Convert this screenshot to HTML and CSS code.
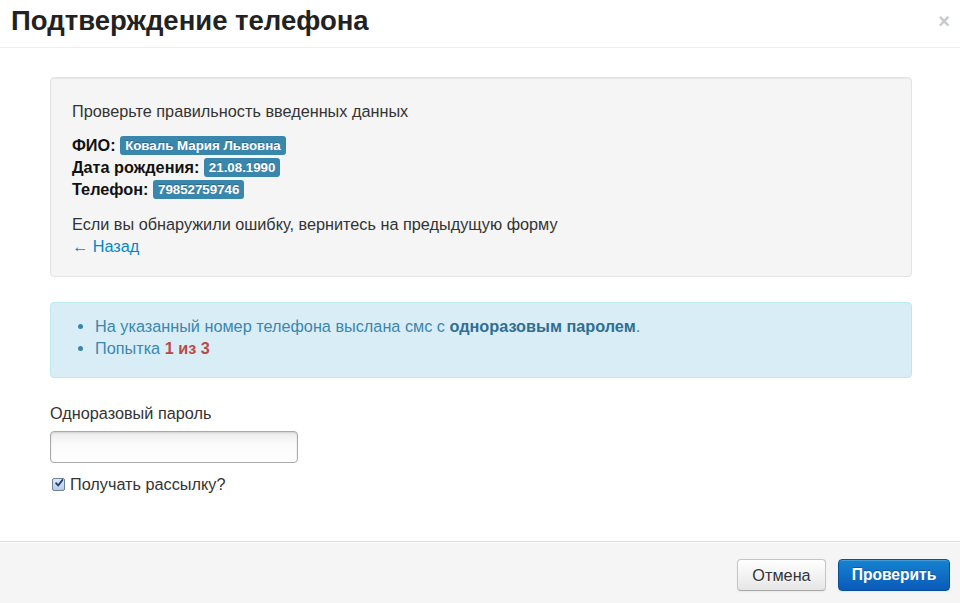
FILE: index.html
```html
<!DOCTYPE html>
<html lang="ru">
<head>
<meta charset="utf-8">
<link rel="stylesheet" href="styles.css">
</head>
<body>
<div class="modal">
  <div class="modal-header">
    <h3>Подтверждение телефона</h3>
    <span class="close">×</span>
  </div>
  <div class="modal-body">
    <div class="well">
      <p class="first">Проверьте правильность введенных данных</p>
      <div class="data">
        <div><b>ФИО:</b> <span class="label">Коваль Мария Львовна</span></div>
        <div><b>Дата рождения:</b> <span class="label">21.08.1990</span></div>
        <div><b>Телефон:</b> <span class="label">79852759746</span></div>
      </div>
      <p class="last">Если вы обнаружили ошибку, вернитесь на предыдущую форму<br><a href="#">← Назад</a></p>
    </div>
    <div class="alert">
      <ul>
        <li>На указанный номер телефона выслана смс с <b>одноразовым паролем</b>.</li>
        <li>Попытка <b class="red">1 из 3</b></li>
      </ul>
    </div>
    <label class="field-label">Одноразовый пароль</label>
    <div class="input"></div>
    <label class="check"><span class="box"><svg width="12" height="12" viewBox="0 0 12 12"><path d="M2.5 6.2 L5 9 L10 2.5" fill="none" stroke="#1d3f73" stroke-width="2.2" stroke-linecap="round" stroke-linejoin="round"/></svg></span>Получать рассылку?</label>
  </div>
  <div class="modal-footer">
    <button class="btn">Отмена</button>
    <button class="btn btn-primary">Проверить</button>
  </div>
</div>
</body>
</html>
```
FILE: styles.css
```css
* { box-sizing: border-box; }
html, body { margin: 0; padding: 0; }
body {
  width: 960px;
  height: 603px;
  overflow: hidden;
  background: #fff;
  font-family: "Liberation Sans", Arial, sans-serif;
  font-size: 16.25px;
  line-height: 22px;
  color: #333;
}
.modal {
  display: flex;
  flex-direction: column;
  height: 603px;
}
.modal-header {
  height: 48px;
  border-bottom: 1px solid #eee;
  display: flex;
  align-items: flex-start;
  justify-content: space-between;
  padding: 0 10px 0 11px;
}
.modal-header h3 {
  margin: 4px 0 0;
  font-size: 27.5px;
  line-height: 34px;
  font-weight: bold;
  color: #222;
}
.close {
  font-size: 20px;
  line-height: 20px;
  margin-top: 11px;
  color: #c8c8c8;
  font-weight: bold;
}
.modal-body {
  flex: 1;
  padding: 29px 48px 0 50px;
}
.well {
  background: #f5f5f5;
  border: 1px solid #e3e3e3;
  border-radius: 4px;
  box-shadow: inset 0 1px 1px rgba(0,0,0,0.05);
  padding: 22px 20px 16px 21px;
  height: 200px;
}
.well p { margin: 0; }
.well .first { margin-bottom: 12px; }
.data { margin-bottom: 13px; }
.data b { color: #111; }
.label {
  display: inline-block;
  background: #3a87ad;
  color: #fff;
  font-weight: bold;
  font-size: 13.3px;
  line-height: 19px;
  padding: 0 5px;
  border-radius: 3px;
  vertical-align: 1px;
  text-shadow: 0 -1px 0 rgba(0,0,0,0.25);
}
a { color: #0088cc; text-decoration: none; }
.alert {
  margin-top: 25px;
  background: #d9edf7;
  border: 1px solid #bce8f1;
  border-radius: 4px;
  color: #3a87ad;
  padding: 12px 20px 17px 14px;
  height: 76px;
}
.alert ul { margin: 0; padding-left: 30px; }
.alert b { color: #2f6f93; }
.alert b.red { color: #b94a48; }
.field-label {
  display: block;
  margin-top: 24px;
  color: #333;
}
.input {
  margin-top: 7px;
  width: 248px;
  height: 32px;
  border: 1px solid #a9a9a9;
  border-radius: 4px;
  background: linear-gradient(#ececec, #fafafa 40%, #fff);
  box-shadow: inset 0 1px 2px rgba(0,0,0,0.12);
}
.check {
  display: flex;
  align-items: center;
  margin-top: 10px;
  gap: 5px;
}
.box {
  width: 13px;
  height: 13px;
  margin-left: 2px;
  border: 1px solid #6d7f99;
  border-radius: 2px;
  background: linear-gradient(#dfe8f5, #b9cbe6);
  display: flex;
  align-items: center;
  justify-content: center;
}
.box svg { margin-top: -2px; margin-left: 1px; }
.modal-footer {
  height: 62px;
  background: #f5f5f5;
  border-top: 1px solid #ddd;
  box-shadow: inset 0 1px 0 #fff;
  display: flex;
  justify-content: flex-end;
  align-items: flex-start;
  gap: 12px;
  padding: 17px 10px 0 0;
}
.btn {
  font-family: "Liberation Sans", Arial, sans-serif;
  font-size: 16.25px;
  height: 32px;
  padding: 0 10px;
  border-radius: 4px;
  border: 1px solid #c5c5c5;
  border-bottom-color: #a8a8a8;
  background: linear-gradient(#ffffff, #e6e6e6);
  color: #333;
  box-shadow: inset 0 1px 0 rgba(255,255,255,0.2), 0 1px 2px rgba(0,0,0,0.05);
  text-shadow: 0 1px 1px rgba(255,255,255,0.75);
}
.btn:first-child { width: 89px; }
.btn-primary {
  width: 112px;
  font-size: 15.6px;
  color: #fff;
  font-weight: bold;
  border-color: #0a4f9e;
  background: linear-gradient(#1583d1, #0a5ab8);
  text-shadow: 0 -1px 0 rgba(0,0,0,0.25);
}
```
